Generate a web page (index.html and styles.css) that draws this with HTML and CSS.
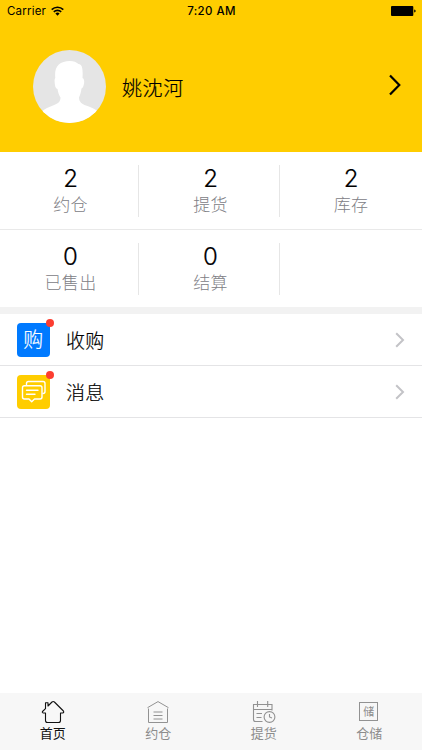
FILE: index.html
```html
<!DOCTYPE html>
<html lang="zh-CN">
<head>
  <meta charset="UTF-8" />
  <title>首页</title>
  <meta name="viewport" content="width=device-width, initial-scale=1.0" />
  <link rel="stylesheet" href="styles.css">
</head>
<body>
  <header class="header">
    <div class="status">
      <div class="carrier">
        <span>Carrier</span>
        <svg width="13" height="10" viewBox="0 0 13 10" fill="none" stroke="#000" stroke-width="1.6">
          <path d="M.7 3.6a8.3 8.3 0 0 1 11.6 0M2.8 5.9a5.3 5.3 0 0 1 7.4 0" />
          <path d="M4.4 7.6a3 3 0 0 1 4.2 0L6.5 9.8z" fill="#000" stroke="none" />
        </svg>
      </div>
      <div class="time">7:20 AM</div>
      <svg class="battery" width="25" height="10" viewBox="0 0 25 10">
        <rect width="22.3" height="10" rx="1" />
        <path d="M23.2 3.4q1.5.2 1.5 1.6t-1.5 1.6z" />
      </svg>
    </div>
    <div class="profile">
      <svg class="avatar" width="73" height="73" viewBox="0 0 73 73">
        <defs><clipPath id="round"><circle cx="36.5" cy="36.5" r="36.5" /></clipPath></defs>
        <g clip-path="url(#round)">
          <rect width="73" height="73" fill="#e5e5e5" />
          <path fill="#fff" d="M22.300 28C21 17 26 11 37 11c4 0 6 1 8.500 3 4 0 4.500 6 4 14 2 1 2 4 1.200 7-.4 2-1 3-2.200 3.500-.5 4-1.500 7-2.500 9 0 4.500 3 6.500 7 8 5 1.500 8 3 12 6V74H8V62c4-3.500 8-5 12-6.500 5-2 7.500-3.500 7.500-8-1.500-2-2.500-5-3-8.500-1.500-.5-2.300-2-2.500-4-.5-3-.700-6 .300-7z" />
        </g>
      </svg>
      <span class="name">姚沈河</span>
      <svg width="12" height="22" viewBox="0 0 12 22" fill="none" stroke="#000" stroke-width="2.200">
        <path d="M1 1.500 10.300 11 1 20.500" />
      </svg>
    </div>
  </header>

  <section class="stats">
    <div class="stat"><b>2</b><span>约仓</span></div>
    <div class="stat"><b>2</b><span>提货</span></div>
    <div class="stat"><b>2</b><span>库存</span></div>
  </section>
  <section class="stats">
    <div class="stat"><b>0</b><span>已售出</span></div>
    <div class="stat"><b>0</b><span>结算</span></div>
    <div class="stat"></div>
  </section>

  <ul class="menu">
    <li>
      <div class="icon blue">购<i class="dot"></i></div>
      <span class="label">收购</span>
      <svg width="10" height="16" viewBox="0 0 10 16" fill="none" stroke="#c3c3c7" stroke-width="2">
        <path d="M1.200 1.200 8 8 1.200 14.800" />
      </svg>
    </li>
    <li>
      <div class="icon yellow">
        <svg width="34" height="34" viewBox="0 0 34 34" fill="none" stroke="#fff" stroke-width="1.400" stroke-linecap="round" stroke-linejoin="round">
          <path d="M9.500 9.500v-1q0-2 2-2h14.500q2 0 2 2v8q0 2-2 2" />
          <path d="M7.500 10.700h15.500q2 0 2 2v9.300q0 2-2 2h-5.500l-2.800 2.800-2.700-2.800H7.500q-2 0-2-2v-9.300q0-2 2-2zM9.500 15.300h11.500M9.500 19.300h8.500" />
        </svg>
        <i class="dot"></i>
      </div>
      <span class="label">消息</span>
      <svg width="10" height="16" viewBox="0 0 10 16" fill="none" stroke="#c3c3c7" stroke-width="2">
        <path d="M1.200 1.200 8 8 1.200 14.800" />
      </svg>
    </li>
  </ul>

  <nav class="tabbar">
    <div class="tab active">
      <svg width="24" height="24" viewBox="0 0 24 24" fill="none" stroke="#111" stroke-width="1.100" stroke-linejoin="round">
        <path d="M4.500 13H2.200Q.8 12.500 1.500 11.500L4.500 8.700V2.800H7V6l4-4q1.200-1 2.400 0l9 9q1 1.600-.8 2H19.500v7.500q0 2-2 2H6.500q-2 0-2-2z" />
      </svg>
      <span>首页</span>
    </div>
    <div class="tab">
      <svg width="24" height="24" viewBox="0 0 24 24" fill="none" stroke="#929292" stroke-width="1">
        <path d="M1.500 7.700 12 1.600 22.500 7.700M2.500 8.500v14h19v-14M7.500 12h9M7.500 15.500h9M7.500 19h9" />
      </svg>
      <span>约仓</span>
    </div>
    <div class="tab">
      <svg width="24" height="24" viewBox="0 0 24 24" fill="none" stroke="#929292" stroke-width="1.100">
        <path d="M10.500 21.500H3.500q-2 0-2-2v-15h18.500v6M1.500 9.500H20M5.500 1v6M15.700 1v6M4.500 13.500h5.500M4.500 17.500h5" />
        <circle cx="17.500" cy="17" r="5.400" />
        <path d="M17.500 14V17l2.500 1" />
      </svg>
      <span>提货</span>
    </div>
    <div class="tab">
      <div class="box">储</div>
      <span>仓储</span>
    </div>
  </nav>
</body>
</html>
```
FILE: styles.css
```css
* {
  box-sizing: border-box;
}
body {
  margin: 0;
  height: 750px;
  display: flex;
  flex-direction: column;
  background: #fff;
  color: #000;
  font-family: Inter, "Noto Sans CJK SC", sans-serif;
}
svg {
  display: block;
  flex: none;
}
.header {
  height: 152px;
  background: #ffcd00;
}
.status {
  height: 22px;
  padding: 0 6px 0 7px;
  display: grid;
  grid-template-columns: 1fr auto 1fr;
  align-items: center;
  font-size: 11.5px;
  line-height: 22px;
}
.carrier {
  display: flex;
  gap: 5px;
  align-items: center;
  letter-spacing: 0.2px;
}
.time {
  font-weight: 500;
  letter-spacing: 0.4px;
}
.battery {
  justify-self: end;
}
.profile {
  display: flex;
  align-items: center;
  height: 129px;
  padding: 0 21px 0 33.4px;
}
.profile svg:last-child {
  margin-bottom: 3px;
}
.name {
  flex: 1;
  margin-left: 15.6px;
  padding-top: 1px;
  font-size: 20px;
  font-weight: 300;
  letter-spacing: 0.6px;
  -webkit-text-stroke: 0.2px;
}
.stats {
  display: grid;
  grid-template-columns: 139px 141px 142px;
  height: 78px;
  padding: 13px 0;
  border-bottom: 1px solid #e9e9e9;
}
.stats + .stats {
  border-bottom: 0;
  height: 77px;
}
.stat {
  display: flex;
  flex-direction: column;
  align-items: center;
  padding-left: 3px;
  border-right: 1px solid #e6e6e6;
}
.stat:last-child {
  padding-left: 0;
  border-right: 0;
}
.stat b {
  font-size: 24px;
  font-weight: 300;
  line-height: 28px;
  -webkit-text-stroke: 0.2px;
}
.stat span {
  font-size: 17px;
  font-weight: 300;
  line-height: 24px;
  letter-spacing: 0.3px;
  color: #808085;
}
.menu {
  margin: 0;
  padding: 0;
  list-style: none;
  border-top: 7px solid #f2f2f2;
}
.menu li {
  display: flex;
  align-items: center;
  height: 52px;
  padding: 0 17px 0 16.5px;
  border-bottom: 1px solid #e4e4e6;
}
.icon {
  position: relative;
  width: 33.5px;
  height: 34px;
  border-radius: 4px;
  color: #fff;
  font-size: 20px;
  font-weight: 300;
  line-height: 34px;
  text-align: center;
  -webkit-text-stroke: 0.2px;
}
.blue {
  background: #007aff;
}
.yellow {
  background: #ffcd00;
}
.dot {
  position: absolute;
  top: -4px;
  right: -4px;
  width: 8px;
  height: 8px;
  border-radius: 50%;
  background: #fc3d30;
}
.label {
  flex: 1;
  margin-left: 16px;
  font-size: 19px;
  font-weight: 300;
  letter-spacing: 0.3px;
  -webkit-text-stroke: 0.2px;
}
.tabbar {
  display: grid;
  grid-template-columns: repeat(4, 1fr);
  height: 57px;
  margin-top: auto;
  padding-top: 7px;
  background: #f7f7f7;
}
.tab {
  display: flex;
  flex-direction: column;
  align-items: center;
  color: #8c8c8c;
  font-size: 13px;
  line-height: 18px;
}
.tab.active {
  color: #111;
}
.box {
  width: 19px;
  height: 19px;
  margin: 2px 1px 3px 0;
  border: 1px solid #929292;
  font-size: 11px;
  line-height: 18px;
  text-align: center;
}
```
